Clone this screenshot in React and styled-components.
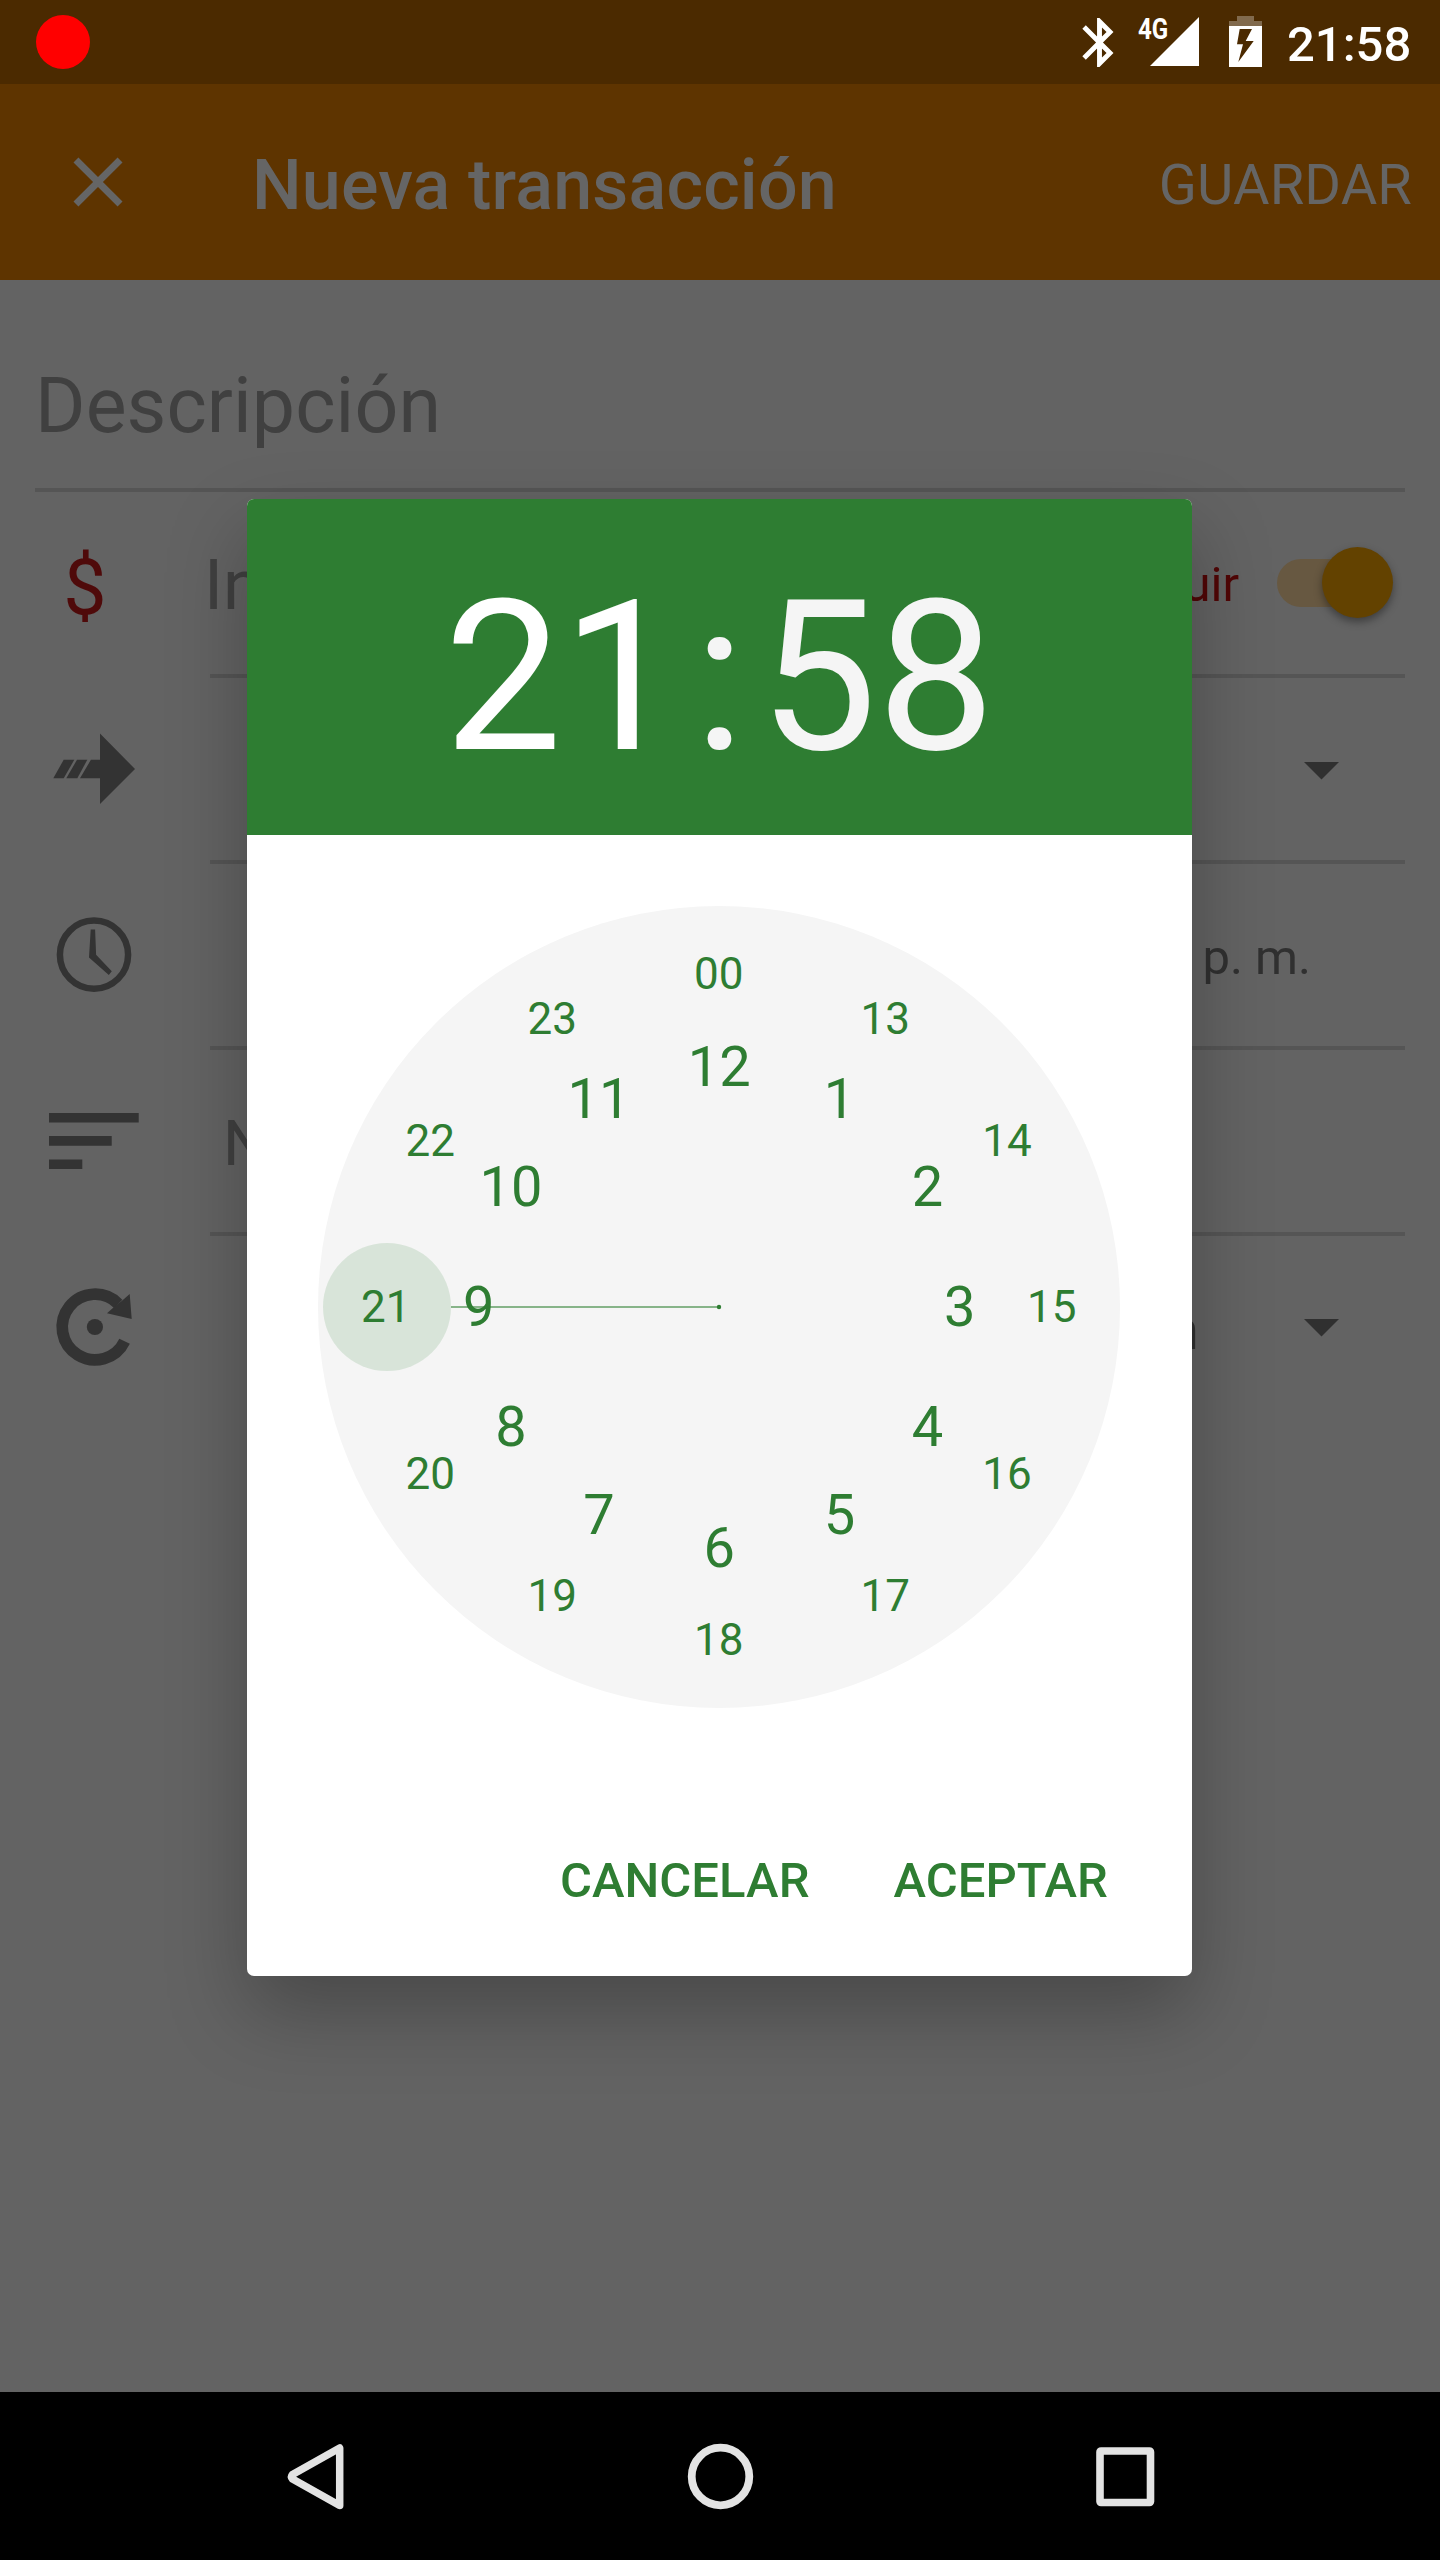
import React from "react";
import styled, { createGlobalStyle } from "styled-components";

const GREEN = "#2e7d32";
const ICON = "#333333";

const GlobalStyle = createGlobalStyle`
  html, body { margin: 0; padding: 0; background: #636363; }
  *, *::before, *::after { box-sizing: border-box; }
  svg { display: block; flex: none; }
`;

const Screen = styled.div`
  position: relative;
  display: flex;
  flex-direction: column;
  width: 1440px;
  height: 2560px;
  overflow: hidden;
  background: #636363;
  font-family: Roboto, "Liberation Sans", sans-serif;
`;

const StatusBar = styled.header`
  display: flex;
  align-items: center;
  flex: none;
  height: 84px;
  padding-left: 36px;
  background: #4b2a00;
  color: #ffffff;
`;

const RecordDot = styled.span`
  width: 54px;
  height: 54px;
  margin-right: auto;
  border-radius: 50%;
  background: #ff0000;
`;

const StatusIcons = styled.div`
  display: flex;
  align-items: center;
`;

const Network = styled.div`
  position: relative;
  margin: 0 28px 0 20px;
`;

const NetworkType = styled.span`
  position: absolute;
  left: 2px;
  top: 12px;
  font-size: 29px;
  line-height: 34px;
  font-weight: 700;
  transform: scaleX(0.83);
  transform-origin: left;
`;

const StatusTime = styled.time`
  width: 153px;
  margin-left: 23px;
  padding-top: 5px;
  font-size: 49px;
  line-height: 58px;
  font-weight: 500;
`;

const AppBar = styled.div`
  display: flex;
  align-items: center;
  flex: none;
  height: 196px;
  padding: 0 28px 0 56px;
  background: #5e3400;
  color: #656565;
`;

const Title = styled.h1`
  flex: 1;
  margin: 0 0 0 112px;
  padding-top: 6px;
  font-size: 70px;
  line-height: 82px;
  font-weight: 500;
  letter-spacing: 0.18px;
`;

const SaveAction = styled.span`
  padding-top: 5px;
  font-size: 56px;
  line-height: 66px;
  letter-spacing: 0.15px;
`;

const Form = styled.main`
  flex: 1;
  padding: 0 35px;
`;

const Description = styled.div`
  height: 212px;
  padding-top: 81px;
  border-bottom: 4px solid #555555;
  font-size: 77px;
  line-height: 91px;
  letter-spacing: 0.1px;
  color: #404040;
`;

const Row = styled.div`
  display: flex;
  height: 186px;
`;

const IconCell = styled.div`
  display: flex;
  align-items: center;
  flex: none;
  width: 175px;
  height: 182px;
  padding-left: 11px;
`;

const Dollar = styled.span`
  width: 78px;
  padding-top: 9px;
  text-align: center;
  font-size: 77px;
  line-height: 90px;
  color: #4f0a0a;
`;

const Field = styled.div`
  display: flex;
  align-items: center;
  justify-content: space-between;
  flex: 1;
  border-bottom: ${(p) => (p.$last ? "none" : "4px solid #555555")};
  ${(p) => p.$last && "height: 182px;"}
`;

const FieldText = styled.span`
  padding-top: ${(p) => p.$drop || 6}px;
  margin-left: ${(p) => p.$start || 0}px;
  font-size: ${(p) => p.$size}px;
  line-height: 1.17;
  color: ${(p) => p.$color || "#404040"};
`;

const Trailing = styled.div`
  display: flex;
  align-items: center;
  gap: ${(p) => p.$gap || 0}px;
  margin-left: auto;
  margin-right: ${(p) => p.$end}px;
`;

const SwitchTrack = styled.div`
  display: flex;
  align-items: center;
  justify-content: flex-end;
  width: 104px;
  height: 48px;
  border-radius: 24px;
  background: #675841;
`;

const SwitchThumb = styled.span`
  flex: none;
  width: 71px;
  height: 71px;
  margin-right: -12px;
  border-radius: 50%;
  background: #634200;
  box-shadow: 0 4px 8px rgba(0, 0, 0, 0.38);
`;

const NavBar = styled.nav`
  display: flex;
  align-items: center;
  justify-content: center;
  gap: 309px;
  flex: none;
  height: 168px;
  background: #000000;
`;

const Overlay = styled.div`
  position: absolute;
  inset: 84px 0 168px;
  display: flex;
  align-items: center;
  justify-content: center;
  padding: 0 1px 1px 0;
`;

const Dialog = styled.section`
  display: flex;
  flex-direction: column;
  width: 945px;
  height: 1477px;
  overflow: hidden;
  border-radius: 7px;
  background: #ffffff;
  box-shadow: 0 35px 80px rgba(0, 0, 0, 0.27);
`;

const TimeHeader = styled.div`
  display: flex;
  align-items: center;
  justify-content: center;
  gap: 14px;
  flex: none;
  height: 336px;
  padding-top: 19px;
  background: ${GREEN};
  color: #f5f5f5;
  font-size: 210px;
  line-height: 246px;
`;

const TimePart = styled.span`
  color: ${(p) => (p.$active ? "#ffffff" : "inherit")};
`;

const Dial = styled.div`
  position: relative;
  flex: none;
  width: 802px;
  height: 802px;
  margin: 71px auto 0 71px;
  border-radius: 50%;
  background: #f5f5f5;
  color: ${GREEN};
`;

const Hand = styled.svg`
  position: absolute;
  inset: 0;
`;

const Hour = styled.span`
  position: absolute;
  width: 100px;
  height: 70px;
  margin: -35px 0 0 -50px;
  text-align: center;
  font-size: ${(p) => (p.$outer ? 44 : 56)}px;
  line-height: 70px;
`;

const Actions = styled.div`
  display: flex;
  align-items: center;
  justify-content: flex-end;
  gap: 84px;
  margin-top: auto;
  height: 196px;
  padding: 5px 84px 0 0;
`;

const DialogButton = styled.span`
  font-size: 49px;
  line-height: 58px;
  font-weight: 500;
  letter-spacing: 0.06px;
  color: ${GREEN};
`;

const INNER = ["12", "1", "2", "3", "4", "5", "6", "7", "8", "9", "10", "11"];
const OUTER = ["00", "13", "14", "15", "16", "17", "18", "19", "20", "21", "22", "23"];

function Ring({ labels, radius, outer }) {
  return labels.map((label, i) => {
    const a = (i * Math.PI) / 6;
    return (
      <Hour
        key={label}
        $outer={outer}
        style={{
          left: (outer ? 400.7 : 401.3) + radius * Math.sin(a),
          top: 401.2 - radius * Math.cos(a),
        }}
      >
        {label}
      </Hour>
    );
  });
}

function Caret() {
  return (
    <svg width="35" height="21" viewBox="0 -3 35 21">
      <path d="M0 0h35L17.5 17.5z" fill="#303030" />
    </svg>
  );
}

export default function App() {
  return (
    <>
      <GlobalStyle />
      <Screen>
        <StatusBar>
          <RecordDot />
          <StatusIcons>
            <svg width="36" height="84" viewBox="1080 0 36 84">
              <path
                transform="translate(1070.1 13.1) scale(2.45)"
                fill="#fff"
                d="M17.71 7.71L12 2h-1v7.59L6.41 5 5 6.41 10.59 12 5 17.59 6.41 19 11 14.41V22h1l5.71-5.71-4.3-4.29 4.3-4.29zM13 5.83l1.88 1.88L13 9.59V5.83zm1.88 10.46L13 18.17v-3.76l1.88 1.88z"
              />
            </svg>
            <Network>
              <NetworkType>4G</NetworkType>
              <svg width="64" height="84" viewBox="1136 0 64 84">
                <path d="M1199 17v49h-49z" fill="#fff" />
              </svg>
            </Network>
            <svg width="36" height="84" viewBox="1228 0 36 84">
              <path d="M1237 16h17v5h8v5h-33v-5h8z" fill="#fff" fillOpacity="0.3" />
              <path
                fillRule="evenodd"
                fill="#fff"
                d="M1229 26h33v41h-33zM1239.7 29L1237 44.3h6L1238.3 62 1253.7 41h-8L1252 29z"
              />
            </svg>
            <StatusTime>21:58</StatusTime>
          </StatusIcons>
        </StatusBar>

        <AppBar>
          <svg width="84" height="84" viewBox="0 0 24 24" fill="#656565">
            <path d="M19 6.41L17.59 5 12 10.59 6.41 5 5 6.41 10.59 12 5 17.59 6.41 19 12 13.41 17.59 19 19 17.59 13.41 12z" />
          </svg>
          <Title>Nueva transacción</Title>
          <SaveAction>GUARDAR</SaveAction>
        </AppBar>

        <Form>
          <Description>Descripción</Description>

          <Row>
            <IconCell>
              <Dollar>$</Dollar>
            </IconCell>
            <Field>
              <FieldText $size={70} $start={-6}>In</FieldText>
              <Trailing $gap={38} $end={24}>
                <FieldText $size={49} $color="#500606" $drop={3}>uir</FieldText>
                <SwitchTrack>
                  <SwitchThumb />
                </SwitchTrack>
              </Trailing>
            </Field>
          </Row>

          <Row>
            <IconCell>
              <svg width="96" height="96" viewBox="46 721 96 96" fill={ICON}>
                <path d="M100 733.6L135 769l-35 35v-25.7H80l10.9-18.5h9.1z" />
                <path d="M77 759.8h10.3l-10 18.5h-11z" />
                <path d="M63.7 759.8h10.6l-10.6 18.5H53.3z" />
              </svg>
            </IconCell>
            <Field>
              <Trailing $end={66}>
                <Caret />
              </Trailing>
            </Field>
          </Row>

          <Row>
            <IconCell>
              <svg width="96" height="96" viewBox="46 907 96 96">
                <circle cx="94" cy="954.7" r="34.1" fill="none" stroke={ICON} strokeWidth="6.5" />
                <path d="M90.7 929.6h4.4l1 25.1 15.7 16.5-3 3.9L89 957.5z" fill={ICON} />
              </svg>
            </IconCell>
            <Field>
              <Trailing $end={94}>
                <FieldText $size={49} $color="#303030" $drop={5}>p. m.</FieldText>
              </Trailing>
            </Field>
          </Row>

          <Row>
            <IconCell>
              <svg width="96" height="96" viewBox="46 1093 96 96" fill={ICON}>
                <path d="M49 1113h89.7v9.5H49zM49 1136h62.7v9.8H49zM49 1159.4h33.3v9.6H49z" />
              </svg>
            </IconCell>
            <Field>
              <FieldText $size={63} $start={13}>N</FieldText>
            </Field>
          </Row>

          <Row>
            <IconCell>
              <svg width="96" height="96" viewBox="46 1279 96 96">
                <path
                  d="M118.2 1303.8A32.8 32.8 0 1 0 124.6 1341.2"
                  fill="none"
                  stroke={ICON}
                  strokeWidth="11.7"
                />
                <path d="M129.7 1294l2 25-24.7-5.8 7-6.2 8.3-6.6z" fill={ICON} />
                <circle cx="94.9" cy="1327" r="8.1" fill={ICON} />
              </svg>
            </IconCell>
            <Field $last>
              <Trailing $gap={105} $end={66}>
                <FieldText $size={56} $color="#303030" $drop={8}>n</FieldText>
                <Caret />
              </Trailing>
            </Field>
          </Row>
        </Form>

        <NavBar>
          <svg width="96" height="96" viewBox="267 2428 96 96">
            <path
              d="M339.7 2448v57.5L292.5 2479q-2-2.3 0-4.6z"
              fill="none"
              stroke="#e3e3e3"
              strokeWidth="7.5"
              strokeLinejoin="round"
            />
          </svg>
          <svg width="96" height="96" viewBox="672 2428 96 96">
            <circle cx="720.5" cy="2476.5" r="28.8" fill="none" stroke="#e3e3e3" strokeWidth="7.8" />
          </svg>
          <svg width="96" height="96" viewBox="1077 2428 96 96">
            <rect x="1100" y="2451" width="50.5" height="51.5" rx="1" fill="none" stroke="#e3e3e3" strokeWidth="7.6" strokeLinejoin="round" />
          </svg>
        </NavBar>

        <Overlay>
          <Dialog>
            <TimeHeader>
              <TimePart $active>21</TimePart>
              <TimePart>:</TimePart>
              <TimePart>58</TimePart>
            </TimeHeader>
            <Dial>
              <Hand width="802" height="802" viewBox="0 0 802 802">
                <circle cx="69" cy="401" r="64" fill={GREEN} fillOpacity="0.14" />
                <path d="M133 401H401" stroke="#87b489" strokeWidth="2" />
                <circle cx="401" cy="401" r="2.2" fill={GREEN} />
              </Hand>
              <Ring labels={OUTER} radius={333} outer />
              <Ring labels={INNER} radius={240.5} />
            </Dial>
            <Actions>
              <DialogButton>CANCELAR</DialogButton>
              <DialogButton>ACEPTAR</DialogButton>
            </Actions>
          </Dialog>
        </Overlay>
      </Screen>
    </>
  );
}
